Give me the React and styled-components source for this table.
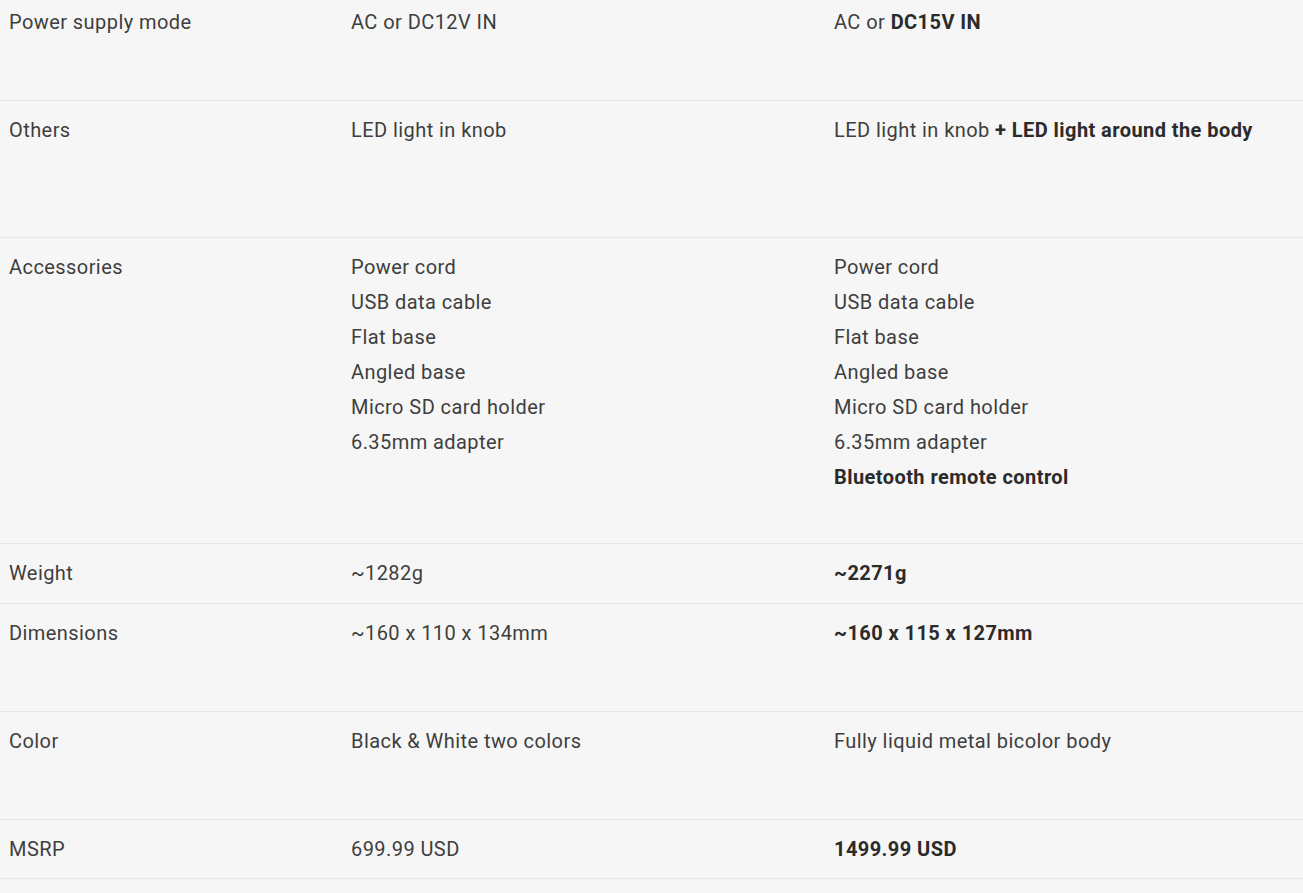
import React from "react";
import styled, { createGlobalStyle } from "styled-components";

const Global = createGlobalStyle`
  html, body { margin: 0; padding: 0; background: #f6f6f6; }
  body { font-family: Roboto, "Liberation Sans", sans-serif; color: #3a3a3a; }
`;

const Table = styled.div`
  width: 1303px;
  display: flex;
  flex-direction: column;
`;

const Row = styled.div`
  display: grid;
  grid-template-columns: 342px 483px 1fr;
  padding: ${(p) => (p.$first ? "5px" : "12px")} 0 ${(p) => 12 + (p.$extra || 0)}px;
  border-bottom: 1px solid #e6e6e6;
`;

const Cell = styled.div`
  padding-left: 9px;
  font-size: 20px;
  line-height: 35px;
  letter-spacing: 0.43px;
  color: #3e3e3e;
  white-space: nowrap;
`;

const Line = styled.div``;

const B = styled.strong`
  font-weight: 700;
  color: #2b2b2b;
`;

const acc = ["Power cord", "USB data cable", "Flat base", "Angled base", "Micro SD card holder", "6.35mm adapter"];

export default function App() {
  return (
    <>
      <Global />
      <Table>
        <Row $first $extra={48}>
          <Cell>Power supply mode</Cell>
          <Cell>AC or DC12V IN</Cell>
          <Cell>AC or <B>DC15V IN</B></Cell>
        </Row>
        <Row $extra={77}>
          <Cell>Others</Cell>
          <Cell>LED light in knob</Cell>
          <Cell>LED light in knob <B>+ LED light around the body</B></Cell>
        </Row>
        <Row $extra={36}>
          <Cell>Accessories</Cell>
          <Cell>{acc.map((a) => <Line key={a}>{a}</Line>)}</Cell>
          <Cell>
            {acc.map((a) => <Line key={a}>{a}</Line>)}
            <Line><B>Bluetooth remote control</B></Line>
          </Cell>
        </Row>
        <Row>
          <Cell>Weight</Cell>
          <Cell>~1282g</Cell>
          <Cell><B>~2271g</B></Cell>
        </Row>
        <Row $extra={48}>
          <Cell>Dimensions</Cell>
          <Cell>~160 x 110 x 134mm</Cell>
          <Cell><B>~160 x 115 x 127mm</B></Cell>
        </Row>
        <Row $extra={48}>
          <Cell>Color</Cell>
          <Cell>Black &amp; White two colors</Cell>
          <Cell>Fully liquid metal bicolor body</Cell>
        </Row>
        <Row $extra={-1}>
          <Cell>MSRP</Cell>
          <Cell>699.99 USD</Cell>
          <Cell><B>1499.99 USD</B></Cell>
        </Row>
        <Row>
          <Cell>&nbsp;</Cell>
          <Cell></Cell>
          <Cell></Cell>
        </Row>
      </Table>
    </>
  );
}
